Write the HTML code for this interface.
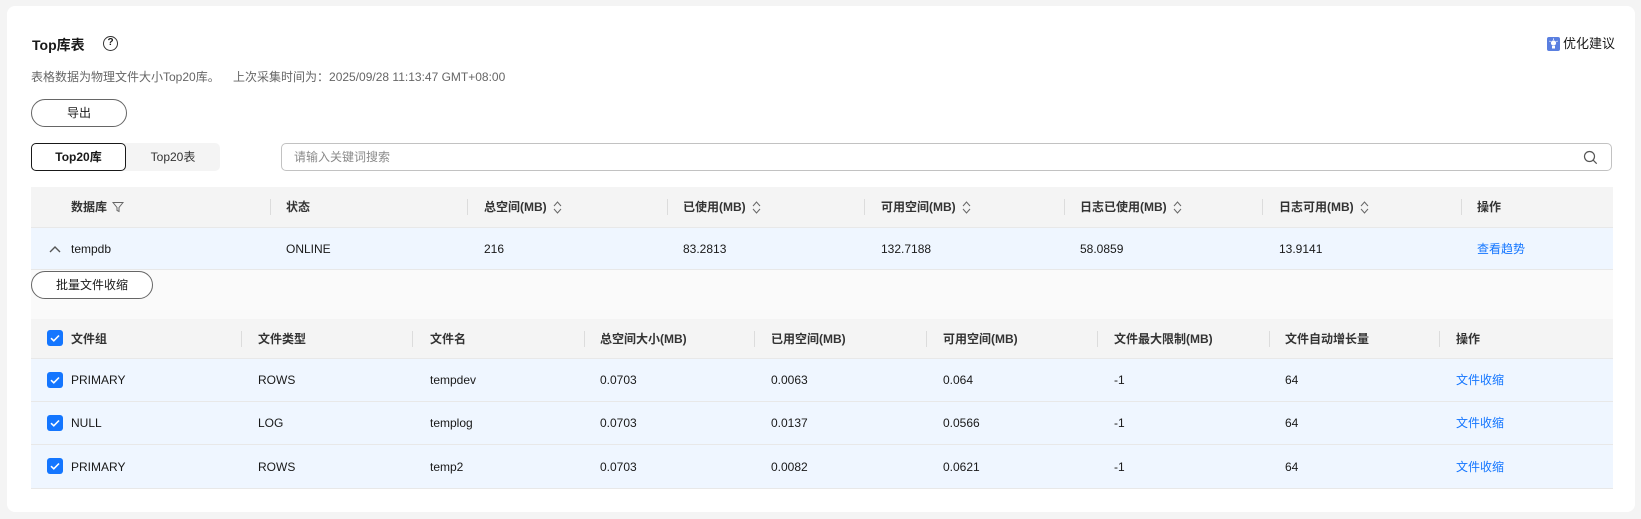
<!DOCTYPE html>
<html><head><meta charset="utf-8"><style>
*{box-sizing:border-box;margin:0;padding:0}
body{width:1641px;height:519px;background:#f4f4f4;font-family:"Liberation Sans","Noto Sans CJK SC",sans-serif;font-size:12px;color:#191919;position:relative;overflow:hidden}
.card{position:absolute;left:7px;top:6px;width:1628px;height:506px;background:#fff;border-radius:8px}
.a{position:absolute}
.title{left:32px;top:35px;font-size:14px;font-weight:bold;color:#191919}
.help{left:103px;top:36px;width:15px;height:15px;border:1.3px solid #333;border-radius:50%;font-size:10px;font-weight:bold;text-align:center;line-height:12px}
.desc{left:31px;top:68px;color:#666;font-size:12px}
.btn{border:1px solid #666;border-radius:15px;background:#fff;text-align:center;color:#191919}
.hdr{background:#f4f4f4;font-weight:bold;color:#333}
.cell{position:absolute;top:0;height:100%;display:flex;align-items:center;white-space:nowrap;line-height:14px}
.sep{position:absolute;width:1px;height:16px;background:#dcdcdc}
.sort{display:inline-block;margin-left:6px;width:9px;height:13px;vertical-align:middle}
.cb{width:16px;height:16px;background:#1476ff;border-radius:3px;position:absolute;left:47px}
.link{color:#1476ff}
</style></head><body>
<div class="card"></div>
<div class="a title">Top库表</div>
<div class="a help">?</div>
<div class="a desc">表格数据为物理文件大小Top20库。&nbsp;&nbsp;&nbsp;&nbsp;上次采集时间为：2025/09/28 11:13:47 GMT+08:00</div>
<div class="a" style="left:1547px;top:37px;width:13px;height:14px;background:#5a7fe0;border-radius:2px"><svg width="13" height="14" viewBox="0 0 13 14"><circle cx="6.5" cy="6" r="2.6" fill="#fff"/><rect x="5" y="9" width="3" height="2.5" fill="#fff"/><path d="M6.5 1.5v1.2M2.5 4l1 .7M10.5 4l-1 .7" stroke="#fff" stroke-width="1"/></svg></div>
<div class="a" style="left:1563px;top:36px;font-size:13px;line-height:16px;color:#191919">优化建议</div>
<div class="a btn" style="left:31px;top:99px;width:96px;height:28px;line-height:26px">导出</div>
<div class="a" style="left:31px;top:143px;width:189px;height:28px;background:#f4f4f4;border-radius:5px"></div>
<div class="a" style="left:31px;top:143px;width:95px;height:28px;border:1px solid #191919;border-radius:5px;background:#fff;text-align:center;line-height:26px;font-weight:bold">Top20库</div>
<div class="a" style="left:126px;top:143px;width:94px;height:28px;text-align:center;line-height:28px;color:#333">Top20表</div>
<div class="a" style="left:281px;top:143px;width:1331px;height:28px;border:1px solid #c2c2c2;border-radius:5px;padding-left:12px;line-height:26px;color:#8a8a8a">请输入关键词搜索</div>
<svg class="a" style="left:1583px;top:150px" width="15" height="15" viewBox="0 0 15 15"><circle cx="6.5" cy="6.5" r="5" fill="none" stroke="#555" stroke-width="1.2"/><path d="M10.2 10.2l3.5 3.5" stroke="#555" stroke-width="1.2"/></svg>

<div class="a hdr" style="left:31px;top:187px;width:1582px;height:40px">
 <div class="cell" style="left:40px">数据库<svg style="margin-left:5px" width="12" height="12" viewBox="0 0 12 12"><path d="M1 1.5h10L7 6.5v4L5 9.5v-3z" fill="none" stroke="#666" stroke-width="1"/></svg></div>
 <div class="sep" style="left:239px;top:12px"></div><div class="cell" style="left:255px">状态</div>
 <div class="sep" style="left:436px;top:12px"></div><div class="cell" style="left:453px">总空间(MB)<svg class="sort" viewBox="0 0 9 13"><path d="M1 5l3.5-4 3.5 4M1 8l3.5 4 3.5-4" fill="none" stroke="#666"/></svg></div>
 <div class="sep" style="left:636px;top:12px"></div><div class="cell" style="left:652px">已使用(MB)<svg class="sort" viewBox="0 0 9 13"><path d="M1 5l3.5-4 3.5 4M1 8l3.5 4 3.5-4" fill="none" stroke="#666"/></svg></div>
 <div class="sep" style="left:833px;top:12px"></div><div class="cell" style="left:850px">可用空间(MB)<svg class="sort" viewBox="0 0 9 13"><path d="M1 5l3.5-4 3.5 4M1 8l3.5 4 3.5-4" fill="none" stroke="#666"/></svg></div>
 <div class="sep" style="left:1033px;top:12px"></div><div class="cell" style="left:1049px">日志已使用(MB)<svg class="sort" viewBox="0 0 9 13"><path d="M1 5l3.5-4 3.5 4M1 8l3.5 4 3.5-4" fill="none" stroke="#666"/></svg></div>
 <div class="sep" style="left:1231px;top:12px"></div><div class="cell" style="left:1248px">日志可用(MB)<svg class="sort" viewBox="0 0 9 13"><path d="M1 5l3.5-4 3.5 4M1 8l3.5 4 3.5-4" fill="none" stroke="#666"/></svg></div>
 <div class="sep" style="left:1430px;top:12px"></div><div class="cell" style="left:1446px">操作</div>
</div>
<div class="a" style="left:31px;top:227px;width:1582px;height:43px;background:#eff6ff;border-top:1px solid #e8e8e8;border-bottom:1px solid #e8e8e8">
 <div class="cell" style="left:18px"><svg width="12" height="8" viewBox="0 0 12 8"><path d="M1 7l5-5 5 5" fill="none" stroke="#555" stroke-width="1.4"/></svg></div>
 <div class="cell" style="left:40px">tempdb</div>
 <div class="cell" style="left:255px">ONLINE</div>
 <div class="cell" style="left:453px">216</div>
 <div class="cell" style="left:652px">83.2813</div>
 <div class="cell" style="left:850px">132.7188</div>
 <div class="cell" style="left:1049px">58.0859</div>
 <div class="cell" style="left:1248px">13.9141</div>
 <div class="cell link" style="left:1446px">查看趋势</div>
</div>
<div class="a" style="left:31px;top:270px;width:1582px;height:49px;background:#fafafa"></div>
<div class="a btn" style="left:31px;top:271px;width:122px;height:28px;line-height:26px">批量文件收缩</div>

<div class="a hdr" style="left:31px;top:319px;width:1582px;height:39px"></div>
<div class="a" style="left:0;top:319px;width:1641px;height:39px;font-weight:bold;color:#333">
 <div class="cb" style="top:11px"><svg width="16" height="16" viewBox="0 0 16 16"><path d="M4 8.2l2.8 2.6L12 5.5" fill="none" stroke="#fff" stroke-width="1.6"/></svg></div>
 <div class="cell" style="left:71px">文件组</div>
 <div class="sep" style="left:241px;top:12px"></div><div class="cell" style="left:258px">文件类型</div>
 <div class="sep" style="left:412px;top:12px"></div><div class="cell" style="left:430px">文件名</div>
 <div class="sep" style="left:584px;top:12px"></div><div class="cell" style="left:600px">总空间大小(MB)</div>
 <div class="sep" style="left:754px;top:12px"></div><div class="cell" style="left:771px">已用空间(MB)</div>
 <div class="sep" style="left:926px;top:12px"></div><div class="cell" style="left:943px">可用空间(MB)</div>
 <div class="sep" style="left:1097px;top:12px"></div><div class="cell" style="left:1114px">文件最大限制(MB)</div>
 <div class="sep" style="left:1269px;top:12px"></div><div class="cell" style="left:1285px">文件自动增长量</div>
 <div class="sep" style="left:1439px;top:12px"></div><div class="cell" style="left:1456px">操作</div>
</div>

<div class="a" style="left:31px;top:358px;width:1582px;height:131px;background:#eff6ff"></div>
<div class="a" style="left:31px;top:358px;width:1582px;height:1px;background:#e8e8e8"></div>
<div class="a" style="left:31px;top:401px;width:1582px;height:1px;background:#e8e8e8"></div>
<div class="a" style="left:31px;top:444px;width:1582px;height:1px;background:#e8e8e8"></div>
<div class="a" style="left:31px;top:488px;width:1582px;height:1px;background:#e8e8e8"></div>

<div class="a" style="left:0;top:359px;width:1641px;height:42px">
 <div class="cb" style="top:13px"><svg width="16" height="16" viewBox="0 0 16 16"><path d="M4 8.2l2.8 2.6L12 5.5" fill="none" stroke="#fff" stroke-width="1.6"/></svg></div>
 <div class="cell" style="left:71px">PRIMARY</div><div class="cell" style="left:258px">ROWS</div><div class="cell" style="left:430px">tempdev</div><div class="cell" style="left:600px">0.0703</div><div class="cell" style="left:771px">0.0063</div><div class="cell" style="left:943px">0.064</div><div class="cell" style="left:1114px">-1</div><div class="cell" style="left:1285px">64</div><div class="cell link" style="left:1456px">文件收缩</div>
</div>
<div class="a" style="left:0;top:402px;width:1641px;height:42px">
 <div class="cb" style="top:13px"><svg width="16" height="16" viewBox="0 0 16 16"><path d="M4 8.2l2.8 2.6L12 5.5" fill="none" stroke="#fff" stroke-width="1.6"/></svg></div>
 <div class="cell" style="left:71px">NULL</div><div class="cell" style="left:258px">LOG</div><div class="cell" style="left:430px">templog</div><div class="cell" style="left:600px">0.0703</div><div class="cell" style="left:771px">0.0137</div><div class="cell" style="left:943px">0.0566</div><div class="cell" style="left:1114px">-1</div><div class="cell" style="left:1285px">64</div><div class="cell link" style="left:1456px">文件收缩</div>
</div>
<div class="a" style="left:0;top:445px;width:1641px;height:43px">
 <div class="cb" style="top:13px"><svg width="16" height="16" viewBox="0 0 16 16"><path d="M4 8.2l2.8 2.6L12 5.5" fill="none" stroke="#fff" stroke-width="1.6"/></svg></div>
 <div class="cell" style="left:71px">PRIMARY</div><div class="cell" style="left:258px">ROWS</div><div class="cell" style="left:430px">temp2</div><div class="cell" style="left:600px">0.0703</div><div class="cell" style="left:771px">0.0082</div><div class="cell" style="left:943px">0.0621</div><div class="cell" style="left:1114px">-1</div><div class="cell" style="left:1285px">64</div><div class="cell link" style="left:1456px">文件收缩</div>
</div>
</body></html>
